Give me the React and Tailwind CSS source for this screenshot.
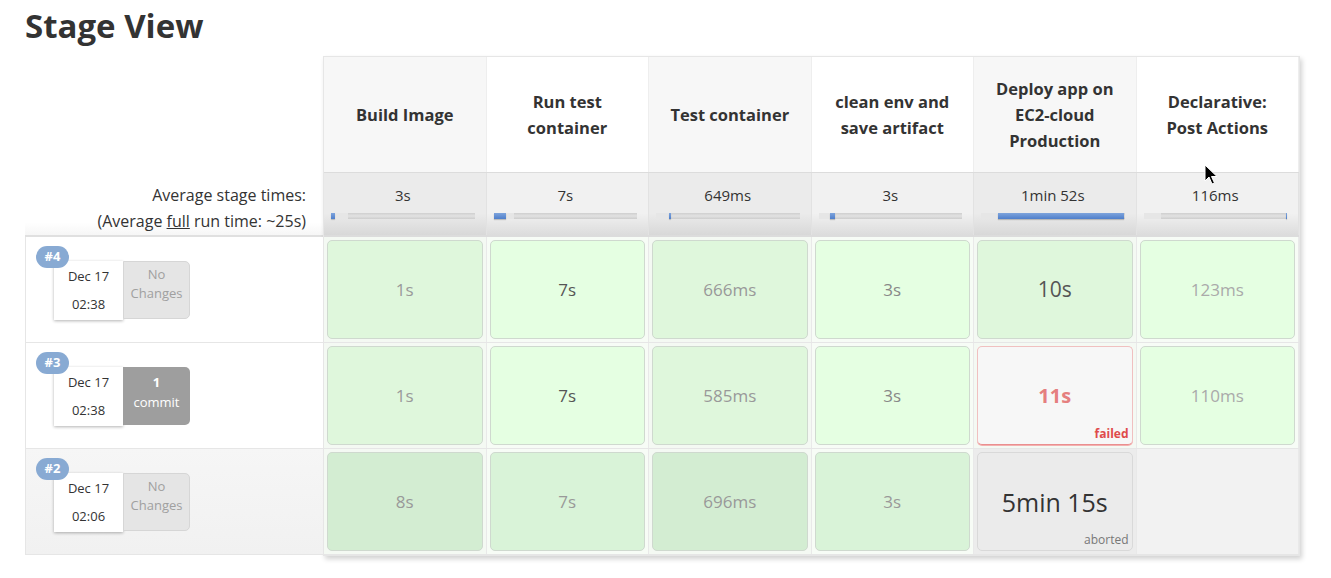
import React from "react";

const stages = [
  { lines: ["Build Image"], avg: "3s", bar: [{ l: 0, w: 3 }], light: [3, 12] },
  { lines: ["Run test", "container"], avg: "7s", bar: [{ l: 0, w: 9 }], light: [9, 14] },
  { lines: ["Test container"], avg: "649ms", bar: [{ l: 9, w: 1.5 }], light: [0, 9] },
  { lines: ["clean env and", "save artifact"], avg: "3s", bar: [{ l: 8, w: 3.5 }], light: [0, 8] },
  { lines: ["Deploy app on", "EC2-cloud", "Production"], avg: "1min 52s", bar: [{ l: 12, w: 88 }], light: [0, 12] },
  { lines: ["Declarative:", "Post Actions"], avg: "116ms", bar: [{ l: 99, w: 1 }], light: [0, 12] },
];

const runs = [
  {
    id: "#4",
    date: "Dec 17",
    time: "02:38",
    changes: null,
    bg: "bg-white",
    cells: [
      { t: "1s", c: "text-[#9a9a9a]", bg: "bg-[#dff7dc]" },
      { t: "7s", c: "text-[#555]", bg: "bg-[#e5ffe2]" },
      { t: "666ms", c: "text-[#999]", bg: "bg-[#dff7dc]" },
      { t: "3s", c: "text-[#888]", bg: "bg-[#e5ffe2]" },
      { t: "10s", c: "text-[#555] text-[21px]", bg: "bg-[#dff7dc]" },
      { t: "123ms", c: "text-[#aaa]", bg: "bg-[#e5ffe2]" },
    ],
  },
  {
    id: "#3",
    date: "Dec 17",
    time: "02:38",
    changes: 1,
    bg: "bg-white",
    cells: [
      { t: "1s", c: "text-[#9a9a9a]", bg: "bg-[#dff7dc]" },
      { t: "7s", c: "text-[#555]", bg: "bg-[#e5ffe2]" },
      { t: "585ms", c: "text-[#999]", bg: "bg-[#dff7dc]" },
      { t: "3s", c: "text-[#888]", bg: "bg-[#e5ffe2]" },
      { t: "11s", status: "failed" },
      { t: "110ms", c: "text-[#aaa]", bg: "bg-[#e5ffe2]" },
    ],
  },
  {
    id: "#2",
    date: "Dec 17",
    time: "02:06",
    changes: null,
    bg: "bg-[linear-gradient(to_bottom,#f6f6f6,#f1f1f1)]",
    cells: [
      { t: "8s", c: "text-[#999]", bg: "bg-[#d3edd2]" },
      { t: "7s", c: "text-[#999]", bg: "bg-[#d9f3d8]" },
      { t: "696ms", c: "text-[#999]", bg: "bg-[#d3edd2]" },
      { t: "3s", c: "text-[#999]", bg: "bg-[#d9f3d8]" },
      { t: "5min 15s", status: "aborted" },
      null,
    ],
  },
];

function RunInfo({ run }) {
  return (
    <div className={`relative h-[106px] border-l border-b border-[#e6e6e6] pl-[28px] pt-[24px] ${run.bg}`}>
      <span className="absolute left-[10px] top-[9px] z-10 flex h-[22px] w-[33px] items-center justify-center rounded-full bg-[#88aad3] text-[13px] font-bold text-white">
        {run.id}
      </span>
      <div className="flex">
        <div className="flex h-[59px] w-[69px] flex-col items-center justify-around bg-white py-[1px] text-[13px] text-[#333] shadow-[0_1px_3px_rgba(0,0,0,0.3)]">
          <span>{run.date}</span>
          <span>{run.time}</span>
        </div>
        {run.changes ? (
          <div className="flex h-[58px] w-[67px] flex-col items-center rounded-r-[5px] bg-[#9e9e9e] pt-[5px] text-[13px] leading-[20px] text-white">
            <span className="font-bold">{run.changes}</span>
            <span>commit</span>
          </div>
        ) : (
          <div className="flex h-[58px] w-[67px] flex-col items-center rounded-r-[5px] border border-[#d6d6d6] bg-[#e5e5e5] pt-[3px] text-[13px] leading-[19px] text-[#a0a0a0]">
            <span>No</span>
            <span>Changes</span>
          </div>
        )}
      </div>
    </div>
  );
}

function StageCell({ cell, i }) {
  const colBg = i % 2 === 0 ? "bg-[#f4f9f3]" : "bg-[#f7fcf6]";
  if (!cell) return <div className="h-full border-r border-[#e9e9e9] bg-[#f2f2f2]" />;
  if (cell.status === "failed") {
    return (
      <div className={`h-full border-r border-[#e9e9e9] p-[3px] ${colBg}`}>
        <div className="relative flex h-full items-center justify-center rounded-[5px] border border-[#f0c0c0] border-b-[#ea8f8f] bg-[#f7f7f7] shadow-[0_1px_0_#f3b0b0]">
          <span className="text-[20px] font-bold text-[#e57f7f]">{cell.t}</span>
          <span className="absolute bottom-[1px] right-[3px] text-[12px] font-bold text-[#df4b4b]">failed</span>
        </div>
      </div>
    );
  }
  if (cell.status === "aborted") {
    return (
      <div className="h-full border-r border-[#e9e9e9] bg-[#ececec] p-[3px]">
        <div className="relative flex h-full items-center justify-center rounded-[5px] border border-[#d9d9d9] bg-[#ebebeb] pt-[2px]">
          <span className="text-[25px] text-[#333]">{cell.t}</span>
          <span className="absolute bottom-[1px] right-[3px] text-[12px] text-[#777]">aborted</span>
        </div>
      </div>
    );
  }
  return (
    <div className={`h-full border-r border-[#e9e9e9] p-[3px] ${colBg}`}>
      <div className={`flex h-full items-center justify-center rounded-[5px] border border-[#cfd9cf] ${cell.bg}`}>
        <span className={`text-[17px] ${cell.c}`}>{cell.t}</span>
      </div>
    </div>
  );
}

export default function App() {
  return (
    <div className="relative h-[578px] overflow-hidden bg-white pl-[25px] font-['Open_Sans','Noto_Sans',sans-serif] text-[#333]">
      <h1 className="pt-[3px] text-[33px] font-bold leading-[46px] text-[#333]">Stage View</h1>

      <div className="mt-[7px] flex">
        {/* left column: averages + run info */}
        <div className="w-[298px]">
          <div className="h-[116px]" />
          <div className="flex h-[65px] flex-col items-end justify-center border-b-2 border-[#e0e0e0] bg-[linear-gradient(to_bottom,#ffffff_80%,#f6f6f6)] pr-[17px] pt-[9px] text-[16px] leading-[26px] text-[#333]">
            <span>Average stage times:</span>
            <span>
              (Average <span className="underline">full</span> run time: ~25s)
            </span>
          </div>
          {runs.map((r) => (
            <RunInfo key={r.id} run={r} />
          ))}
        </div>

        {/* stage table */}
        <div className="w-[977px] border border-[#e6e6e6] shadow-[2px_3px_5px_rgba(0,0,0,0.18)]">
          <div className="grid h-[115px] grid-cols-6">
            {stages.map((s, i) => (
              <div
                key={i}
                className={`flex flex-col items-center justify-center border-r border-[#eeeeee] text-center text-[16.5px] font-bold leading-[26px] text-[#333] ${
                  i % 2 === 0 ? "bg-[#f7f7f7]" : "bg-white"
                }`}
              >
                {s.lines.map((l) => (
                  <span key={l}>{l}</span>
                ))}
              </div>
            ))}
          </div>

          <div className="grid h-[65px] grid-cols-6 border-t border-b-2 border-[#dcdcdc]">
            {stages.map((s, i) => (
              <div
                key={i}
                className={`flex flex-col border-r border-[#e2e2e2] px-[7px] pr-[11px] pt-[11px] ${
                  i % 2 === 0
                    ? "bg-[linear-gradient(to_bottom,#ebebeb_65%,#d8d8d8)]"
                    : "bg-[linear-gradient(to_bottom,#f1f1f1_65%,#dcdcdc)]"
                }`}
              >
                <span className="text-center text-[15px] leading-[22px] text-[#333]">{s.avg}</span>
                <div className="relative mt-[7px] h-[6px] w-full bg-[linear-gradient(to_bottom,#cfcfcf,#e2e2e2_50%,#cdcdcd)]">
                  <div
                    className="absolute top-0 h-full bg-[#e6e6e6]"
                    style={{ left: `${s.light[0]}%`, width: `${s.light[1] - s.light[0]}%` }}
                  />
                  {s.bar.map((b, j) => (
                    <div
                      key={j}
                      className="absolute top-0 h-full bg-[linear-gradient(to_bottom,#7ea4dc,#4f7fcb)] shadow-[0_1px_1px_rgba(0,0,0,0.2)]"
                      style={{ left: `${b.l}%`, width: `${b.w}%` }}
                    />
                  ))}
                </div>
              </div>
            ))}
          </div>

          {runs.map((r) => (
            <div key={r.id} className="grid h-[106px] grid-cols-6 border-b border-[#e6e6e6]">
              {r.cells.map((c, i) => (
                <StageCell key={i} cell={c} i={i} />
              ))}
            </div>
          ))}
        </div>
      </div>

      {/* mouse pointer */}
      <svg className="absolute left-[1204px] top-[164px]" width="14" height="22" viewBox="0 0 14 22">
        <path d="M1 1 L1 17 L5 13 L8 20 L10.5 19 L7.5 12.5 L13 12.5 Z" fill="#000" stroke="#fff" strokeWidth="1" />
      </svg>
    </div>
  );
}
